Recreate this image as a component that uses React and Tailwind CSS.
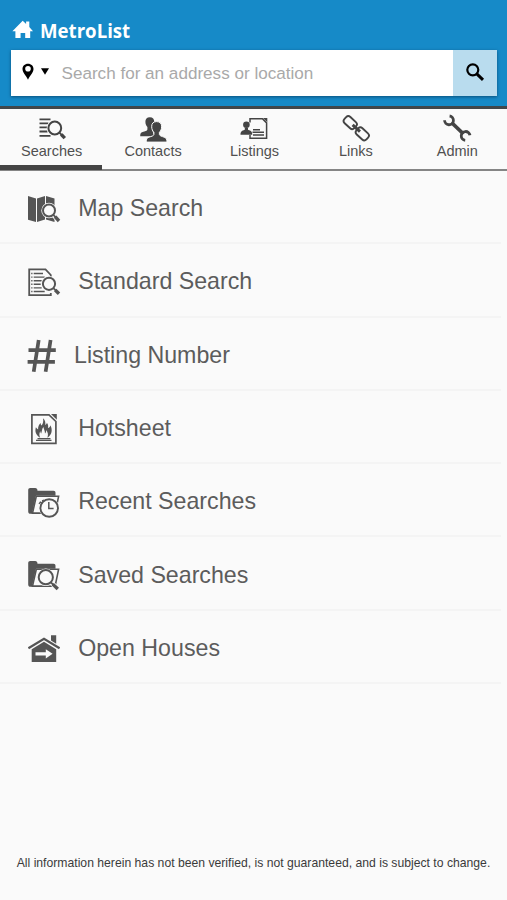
import React from "react";

// Icons share the page's coordinate grid, so each viewBox is its own window on it.
function Icon({ box, className, children }) {
  const [, , w, h] = box.split(" ");
  return (
    <svg viewBox={box} width={w} height={h} className={className} fill="none" stroke="currentColor" aria-hidden="true">
      {children}
    </svg>
  );
}

function Lens({ x, y, r, hx, hy, halo = "#fafafa" }) {
  const k = r * 0.72;
  return (
    <g>
      <circle cx={x} cy={y} r={r + 1.7} fill={halo} stroke="none" />
      <path d={`M${x + k} ${y + k}L${hx} ${hy}`} stroke={halo} strokeWidth="4.8" />
      <circle cx={x} cy={y} r={r} fill={halo} strokeWidth="2" />
      <path d={`M${x + k} ${y + k}L${x + k + 3} ${y + k + 3}`} strokeWidth="1.8" />
      <path d={`M${x + k + 1.8} ${y + k + 1.8}L${hx} ${hy}`} strokeWidth="3.4" />
    </g>
  );
}

const tabs = [
  {
    label: "Searches",
    icon: (
      <Icon box="36 114 30 28">
        <path d="M38.5 119.3h11M38.500 123.300h9M38.500 127.400h8M38.500 131.500h8M38.500 135.800h11" strokeWidth="1.800" />
        <Lens x={53.8} y={128} r={6.4} hx={63.8} hy={138.2} />
      </Icon>
    ),
  },
  {
    label: "Contacts",
    icon: (
      <Icon box="138 114 30 28">
        <g fill="currentColor" stroke="none">
          <path d="M149.8 117.2c3 0 4.6 1.8 4.4 4.6 0 2.4-1 4-2 5.2v2.4l2 6.8h-14c0-2.6.6-3.6 2.4-4.2 2.4-.8 4.6-1.2 4.8-2.6v-2.4c-1.2-1.2-2-2.8-2-5.2-.1-2.8 1.5-4.6 4.400-4.600z" />
          <path stroke="#fafafa" strokeWidth="1" d="M156.600 121.600c3.400 0 5.200 2 5 5.200 0 2.500-.9 4.200-2.200 5.500v2.300c.3 1.300 2.500 1.800 4.800 2.600 2 .7 2.800 2 2.800 4.900h-20.800c0-2.900.7-4.200 2.700-4.900 2.400-.8 4.700-1.300 5-2.600v-2.300c-1.300-1.300-2.200-3-2.200-5.500-.2-3.200 1.500-5.200 4.900-5.200z" />
        </g>
      </Icon>
    ),
  },
  {
    label: "Listings",
    icon: (
      <Icon box="240 114 30 28">
        <path d="M251 122.500v-3.800h12.400l4.200 4.200v15.300h-16.600v-3.200" strokeWidth="1.500" />
        <path d="M264 117.900h4.300v4.300z" fill="currentColor" stroke="none" />
        <path d="M254 129.800h7M253.500 132.300h11.500M254 134.900h11" strokeWidth="1.500" />
        <g fill="currentColor" stroke="none">
          <circle cx="247.400" cy="124.800" r="3.300" />
          <path d="M241.500 134.800c0-3 1-3.800 4.300-5v-2h3.200v2c3.300 1.200 4.300 2 4.300 5z" />
        </g>
      </Icon>
    ),
  },
  {
    label: "Links",
    icon: (
      <Icon box="341 114 30 28">
        <g strokeWidth="1.900" transform="rotate(43 356.300 128.300)">
          <rect x="341.300" y="124.100" width="13.500" height="8.400" rx="3" />
          <rect x="357.800" y="124.100" width="13.500" height="8.400" rx="3" />
          <path d="M351.300 128.300h10" strokeWidth="3" />
        </g>
      </Icon>
    ),
  },
  {
    label: "Admin",
    icon: (
      <Icon box="442 114 30 28">
        <path d="M451.500 122.500L463.500 134" strokeWidth="3.800" />
        <path d="M444.600 120.300A4.400 4.400 0 1 0 449.600 116" strokeWidth="2.800" />
        <path d="M470 135.300A4.400 4.400 0 1 0 465.200 140.300" strokeWidth="2.800" />
      </Icon>
    ),
  },
];

const rows = [
  {
    label: "Map Search",
    icon: (
      <Icon box="26 190 36 36">
        <g fill="currentColor" stroke="none">
          <path d="M28 196l8 2.500V222l-8-2.300z" />
          <path d="M37 198.500l8-2.500v23.500l-8 2.500z" />
          <path d="M46 196l8.500 2.500V222l-8.500-2.500z" />
        </g>
        <Lens x={49} y={210.500} r={6} hx={59} hy={221} />
      </Icon>
    ),
  },
  {
    label: "Standard Search",
    icon: (
      <Icon box="26 263 36 36">
        <path d="M50.800 278v-3l-5.300-5.600H29.200v25.800h21.600v-2.200" strokeWidth="1.800" />
        <path d="M33.700 273.500h9.300M33.700 277.100h11M33.700 280.700h8M33.700 284.300h7M33.700 287.900h8M33.700 291.500h11" strokeWidth="1.400" />
        <path d="M31.200 273.500h1.300M31.200 277.100h1.300M31.200 280.700h1.300M31.200 284.300h1.300M31.200 287.900h1.300M31.200 291.500h1.300" strokeWidth="1.400" />
        <Lens x={49} y={283.800} r={6.100} hx={59} hy={293.800} />
      </Icon>
    ),
  },
  {
    label: "Listing Number",
    narrow: true,
    icon: (
      <Icon box="26 336 32 36">
        <path d="M38.700 340l-5 31.700M50.600 340l-5 31.700M28.500 350.200h27.300M27.600 361.800h27.300" strokeWidth="3.700" />
      </Icon>
    ),
  },
  {
    label: "Hotsheet",
    icon: (
      <Icon box="26 410 36 36">
        <path d="M49 414.900H31.900v28.400h24v-21.800z" strokeWidth="1.700" />
        <path d="M51 414h5.800v5.800z" fill="currentColor" stroke="none" />
        <path d="M36 440.300h15.500M37.500 438.700h13" strokeWidth="1.200" />
        <path
          fill="currentColor"
          stroke="none"
          d="M43 418.200c2.300 2 2.700 4.500 2.200 6.700 1-.3 1.500-1.200 1.700-2.200 1.500 1.800 1.400 3.800 1.100 5.400 1.400-.3 2.200-1.500 2.500-2.800 2 4.400 1.900 9.300-3.100 12.400 1.200-3.200.4-5.400-1.200-7.600.1 1.900-.5 2.900-1.200 3.500 0-3-1.300-4.500-1.600-6.600-1.700 2-1.300 4.300-2.200 6.500-.7-.8-.8-1.700-.8-2.500-1.300 2.200-1.300 4.500-.2 6.700-4.500-2.600-5.500-6.500-4.300-10.500.6.900 1.300 1.900 2.200 2.400-.2-3.100.8-4.900 2.600-6.700 0 1.200.2 2 .8 2.600 1.700-1.900 2.100-4.500 1.500-7.300z"
        />
      </Icon>
    ),
  },
  {
    label: "Recent Searches",
    icon: (
      <Icon box="26 483 36 36">
        <path d="M28.200 511.500V490c0-1.300.8-2 2-2h5c1.400 0 2.300 1 2.300 2.800h16c1.300 0 2 .7 2 2v3H36l-4 18h-1.500c-1.400 0-2.300-.9-2.300-2.300z" fill="currentColor" stroke="none" />
        <path d="M36.300 496.300h22.300l-3.500 16.800H32.500z" fill="#fafafa" strokeWidth="1.600" />
        <circle cx="49.200" cy="508" r="10.200" fill="#fafafa" stroke="none" />
        <circle cx="49.200" cy="508" r="8.800" fill="#fafafa" strokeWidth="1.900" />
        <path d="M48.800 502v6.600h4.800" strokeWidth="1.500" />
        <path d="M39 504l1.300-2 1.800 1.200M42 500.800l2-.8" strokeWidth="1.200" />
      </Icon>
    ),
  },
  {
    label: "Saved Searches",
    icon: (
      <Icon box="26 556 36 36">
        <path d="M28.200 584.500V563c0-1.300.8-2 2-2h5c1.400 0 2.300 1 2.300 2.800h16c1.300 0 2 .7 2 2v3H36l-4 18h-1.500c-1.400 0-2.300-.9-2.300-2.300z" fill="currentColor" stroke="none" />
        <path d="M36.300 569.300h22.300l-3.500 16.800H32.500z" fill="#fafafa" strokeWidth="1.600" />
        <Lens x={45.800} y={577.200} r={7.100} hx={57.800} hy={589} />
      </Icon>
    ),
  },
  {
    label: "Open Houses",
    icon: (
      <Icon box="26 629 36 36">
        <path d="M28.400 648.300L44 638.800l15.600 9.500" strokeWidth="2.200" />
        <g fill="currentColor" stroke="none">
          <path d="M51 635.300h5.200v8.500l-5.200-3.200z" />
          <path d="M44 641.800l12.200 7.400V662H31.700v-12.800z" />
        </g>
        <path d="M35.500 652.200h10.300v-3l6.800 4.600-6.800 4.600v-3H35.500z" fill="#fafafa" stroke="none" />
      </Icon>
    ),
  },
];

function Header() {
  return (
    <header className="h-[109px] border-b-[3px] border-[#41474b] bg-[#168ac8] pl-[11px] pr-[10px] pt-[18px]">
      <div className="flex h-[32px] items-start text-white">
        <svg viewBox="11 18 23 23" width="23" height="23" fill="currentColor" aria-hidden="true">
          <path d="M22.700 20.700l3.400 3.300v-2.500h3.200V27l3.700 4.200h-2.800V38h-5v-5h-4.600v5h-5.200v-6.800h-3z" />
        </svg>
        <h1 className="ml-[6px] origin-left scale-x-[0.955] whitespace-nowrap font-['Open_Sans',sans-serif] text-[19.500px] font-bold leading-[25px]">MetroList</h1>
      </div>
      <div className="flex h-[46px] shadow-[0_1px_3px_rgba(0,40,70,0.6)]">
        <div className="flex flex-1 items-center bg-white text-black">
          <svg viewBox="0 0 14 18" width="14" height="18" className="ml-[10px] -mt-[2px]" fill="currentColor" aria-hidden="true">
            <path fillRule="evenodd" d="M7 .8c3.300 0 5.500 2.300 5.500 5.300 0 3.500-3.300 6.200-5.500 10.700C4.800 12.300 1.500 9.600 1.500 6.100 1.500 3.100 3.700.8 7 .8zm0 2.200a2.800 2.800 0 1 0 0 5.600 2.800 2.800 0 0 0 0-5.600z" />
          </svg>
          <svg viewBox="0 0 8 7" width="8" height="7" className="ml-[6px] -mt-[4px]" fill="currentColor" aria-hidden="true">
            <path d="M0 .3h8L4 6.700z" />
          </svg>
          <span className="ml-[12.500px] pt-[2px] text-[17.100px] leading-none text-[#a9a9a9]">Search for an address or location</span>
        </div>
        <button className="flex w-[44px] items-center justify-center bg-[#b9dcee] text-black" aria-label="Search">
          <svg viewBox="0 0 20 20" width="20" height="20" className="-mt-[2px]" fill="none" stroke="currentColor" aria-hidden="true">
            <circle cx="7.800" cy="7.800" r="5.500" strokeWidth="2.200" />
            <path d="M11.800 11.800l6.200 6" strokeWidth="3" />
          </svg>
        </button>
      </div>
    </header>
  );
}

export default function App() {
  return (
    <div className="flex h-[900px] w-[507px] flex-col overflow-hidden bg-[#fafafa] font-['Liberation_Sans',Arial,sans-serif]">
      <Header />
      <nav className="grid h-[62px] shrink-0 grid-cols-5 border-b-2 border-[#858585] text-[#444]">
        {tabs.map((tab, i) => (
          <div
            key={tab.label}
            className={
              "flex flex-col items-center pl-[2px] pt-[5px] " +
              (i === 0 ? "-mb-px -mr-px border-b-[5px] border-[#444] pr-px" : "")
            }
          >
            {tab.icon}
            <span className="mt-[1px] text-[14.500px] leading-[17px] text-[#505050]">{tab.label}</span>
          </div>
        ))}
      </nav>
      <ul className="mr-[6px]">
        {rows.map((row) => (
          <li key={row.label} className="flex h-[73.300px] items-center border-b-2 border-[#f4f4f4] pl-[26px] pt-[2px] text-[#555]">
            {row.icon}
            <span className={"pt-px text-[23.200px] leading-[28px] text-[#5c5c5c] " + (row.narrow ? "ml-[16px]" : "ml-[16.200px]")}>{row.label}</span>
          </li>
        ))}
      </ul>
      <footer className="mt-auto whitespace-nowrap pb-[29px] text-center text-[12.200px] leading-[16px] text-[#3a3a3a]">
        All information herein has not been verified, is not guaranteed, and is subject to change.
      </footer>
    </div>
  );
}
